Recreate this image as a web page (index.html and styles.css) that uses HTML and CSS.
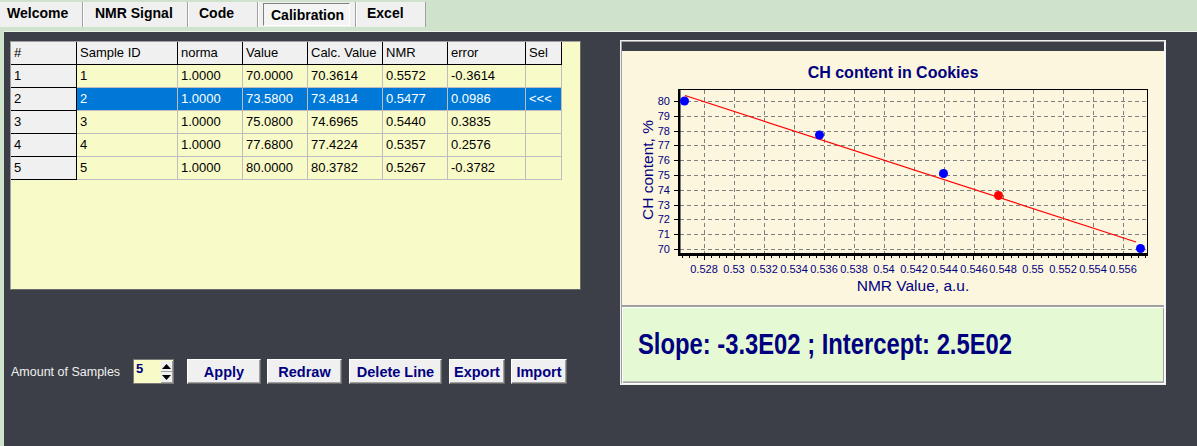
FILE: index.html
```html
<!DOCTYPE html>
<html>
<head>
<meta charset="utf-8">
<link rel="stylesheet" href="styles.css">
</head>
<body>
<div class="tabs">
  <div class="tab t1">Welcome</div>
  <div class="tab t2">NMR Signal</div>
  <div class="tab t3">Code</div>
  <div class="tab t4"><span class="pressed">Calibration</span></div>
  <div class="tab t5">Excel</div>
</div>
<div class="main">
  <div class="left">
    <div class="grid">
      <div class="cell fx">#</div><div class="cell h">Sample ID</div><div class="cell h">norma</div><div class="cell h">Value</div><div class="cell h">Calc. Value</div><div class="cell h">NMR</div><div class="cell h">error</div><div class="cell h">Sel</div>
      <div class="cell fx">1</div><div class="cell c">1</div><div class="cell c">1.0000</div><div class="cell c">70.0000</div><div class="cell c">70.3614</div><div class="cell c">0.5572</div><div class="cell c">-0.3614</div><div class="cell c"></div>
      <div class="cell fx">2</div><div class="cell c sel">2</div><div class="cell c sel">1.0000</div><div class="cell c sel">73.5800</div><div class="cell c sel">73.4814</div><div class="cell c sel">0.5477</div><div class="cell c sel">0.0986</div><div class="cell c sel">&lt;&lt;&lt;</div>
      <div class="cell fx">3</div><div class="cell c">3</div><div class="cell c">1.0000</div><div class="cell c">75.0800</div><div class="cell c">74.6965</div><div class="cell c">0.5440</div><div class="cell c">0.3835</div><div class="cell c"></div>
      <div class="cell fx">4</div><div class="cell c">4</div><div class="cell c">1.0000</div><div class="cell c">77.6800</div><div class="cell c">77.4224</div><div class="cell c">0.5357</div><div class="cell c">0.2576</div><div class="cell c"></div>
      <div class="cell fx">5</div><div class="cell c">5</div><div class="cell c">1.0000</div><div class="cell c">80.0000</div><div class="cell c">80.3782</div><div class="cell c">0.5267</div><div class="cell c">-0.3782</div><div class="cell c"></div>
    </div>
    <div class="controls">
      <span class="lbl">Amount of Samples</span>
      <div class="spin">
        <div class="spin-field">5</div>
        <div class="spin-btns">
          <div class="spin-btn"><svg width="9" height="5" viewBox="0 0 9 5"><path d="M4.5 0 L9 5 L0 5 Z" fill="#000"/></svg></div>
          <div class="spin-btn"><svg width="9" height="5" viewBox="0 0 9 5"><path d="M0 0 L9 0 L4.5 5 Z" fill="#000"/></svg></div>
        </div>
      </div>
      <button class="btn b-apply">Apply</button>
      <button class="btn b-redraw">Redraw</button>
      <button class="btn b-delete">Delete Line</button>
      <button class="btn b-export">Export</button>
      <button class="btn b-import">Import</button>
    </div>
  </div>
  <div class="chart-panel">
    <div class="chart-inner">
      <div class="chart-cap"></div>
      <svg class="plot" width="542" height="254" viewBox="622 51 542 254">
        <text x="893" y="78" class="title" text-anchor="middle">CH content in Cookies</text>
        <g class="grid-lines" stroke="#808080" stroke-width="1" stroke-dasharray="4 3">
          <line x1="680" y1="101.5" x2="1147" y2="101.5"/>
          <line x1="680" y1="116.5" x2="1147" y2="116.5"/>
          <line x1="680" y1="131.5" x2="1147" y2="131.5"/>
          <line x1="680" y1="145.5" x2="1147" y2="145.5"/>
          <line x1="680" y1="160.5" x2="1147" y2="160.5"/>
          <line x1="680" y1="175.5" x2="1147" y2="175.5"/>
          <line x1="680" y1="190.5" x2="1147" y2="190.5"/>
          <line x1="680" y1="205.5" x2="1147" y2="205.5"/>
          <line x1="680" y1="219.5" x2="1147" y2="219.5"/>
          <line x1="680" y1="234.5" x2="1147" y2="234.5"/>
          <line x1="680" y1="249.5" x2="1147" y2="249.5"/>
          <line x1="704.5" y1="90" x2="704.5" y2="253"/>
          <line x1="734.5" y1="90" x2="734.5" y2="253"/>
          <line x1="764.5" y1="90" x2="764.5" y2="253"/>
          <line x1="794.5" y1="90" x2="794.5" y2="253"/>
          <line x1="824.5" y1="90" x2="824.5" y2="253"/>
          <line x1="854.5" y1="90" x2="854.5" y2="253"/>
          <line x1="884.5" y1="90" x2="884.5" y2="253"/>
          <line x1="914.5" y1="90" x2="914.5" y2="253"/>
          <line x1="944.5" y1="90" x2="944.5" y2="253"/>
          <line x1="974.5" y1="90" x2="974.5" y2="253"/>
          <line x1="1003.5" y1="90" x2="1003.5" y2="253"/>
          <line x1="1033.5" y1="90" x2="1033.5" y2="253"/>
          <line x1="1063.5" y1="90" x2="1063.5" y2="253"/>
          <line x1="1093.5" y1="90" x2="1093.5" y2="253"/>
          <line x1="1123.5" y1="90" x2="1123.5" y2="253"/>
        </g>
        <g stroke="#000" stroke-width="1">
          <line x1="678" y1="89.5" x2="1148" y2="89.5"/>
          <line x1="1147.5" y1="89" x2="1147.5" y2="256"/>
          <line x1="674" y1="101.5" x2="678" y2="101.5"/>
          <line x1="674" y1="116.5" x2="678" y2="116.5"/>
          <line x1="674" y1="131.5" x2="678" y2="131.5"/>
          <line x1="674" y1="145.5" x2="678" y2="145.5"/>
          <line x1="674" y1="160.5" x2="678" y2="160.5"/>
          <line x1="674" y1="175.5" x2="678" y2="175.5"/>
          <line x1="674" y1="190.5" x2="678" y2="190.5"/>
          <line x1="674" y1="205.5" x2="678" y2="205.5"/>
          <line x1="674" y1="219.5" x2="678" y2="219.5"/>
          <line x1="674" y1="234.5" x2="678" y2="234.5"/>
          <line x1="674" y1="249.5" x2="678" y2="249.5"/>
        </g>
        <g stroke="#000" stroke-width="1" id="xticks"></g>
        <rect x="678" y="89" width="2.5" height="167" fill="#000"/>
        <rect x="678" y="253" width="470" height="3" fill="#000"/>
        <g class="ylab" text-anchor="end">
          <text x="670" y="105">80</text>
          <text x="670" y="120">79</text>
          <text x="670" y="135">78</text>
          <text x="670" y="149">77</text>
          <text x="670" y="164">76</text>
          <text x="670" y="179">75</text>
          <text x="670" y="194">74</text>
          <text x="670" y="209">73</text>
          <text x="670" y="223">72</text>
          <text x="670" y="238">71</text>
          <text x="670" y="253">70</text>
        </g>
        <g class="xlab" text-anchor="middle">
          <text x="704" y="273">0.528</text>
          <text x="734" y="273">0.53</text>
          <text x="764" y="273">0.532</text>
          <text x="794" y="273">0.534</text>
          <text x="824" y="273">0.536</text>
          <text x="854" y="273">0.538</text>
          <text x="884" y="273">0.54</text>
          <text x="914" y="273">0.542</text>
          <text x="944" y="273">0.544</text>
          <text x="974" y="273">0.546</text>
          <text x="1003" y="273">0.548</text>
          <text x="1033" y="273">0.55</text>
          <text x="1063" y="273">0.552</text>
          <text x="1093" y="273">0.554</text>
          <text x="1123" y="273">0.556</text>
        </g>
        <text class="axt" x="913" y="291" text-anchor="middle">NMR Value, a.u.</text>
        <text class="axt" x="0" y="0" text-anchor="middle" transform="translate(653 170) rotate(-90)">CH content, %</text>
        <line x1="685" y1="95.5" x2="1136" y2="242" stroke="#ff0000" stroke-width="1.2"/>
        <circle cx="684.5" cy="101" r="4.5" fill="#0000ff"/>
        <circle cx="819.5" cy="135" r="4.5" fill="#0000ff"/>
        <circle cx="943.5" cy="173.5" r="4.5" fill="#0000ff"/>
        <circle cx="998.5" cy="195.5" r="4.5" fill="#ff0000"/>
        <circle cx="1140.5" cy="248.5" r="4.5" fill="#0000ff"/>
      </svg>
      <div class="result"><span class="result-text">Slope: -3.3E02 ; Intercept: 2.5E02</span></div>
    </div>
  </div>
</div>
<script src="ticks.js"></script>
</body>
</html>
```

FILE: ticks.js
```js
(function () {
  var g = document.getElementById('xticks');
  var ns = 'http://www.w3.org/2000/svg';
  for (var i = -3; i <= 62; i++) {
    var x = 704 + i * 29.93 / 4;
    if (x < 679 || x > 1147) continue;
    var major = (i % 4 === 0);
    var l = document.createElementNS(ns, 'line');
    var xx = Math.round(x) + 0.5;
    l.setAttribute('x1', xx);
    l.setAttribute('x2', xx);
    l.setAttribute('y1', 256);
    l.setAttribute('y2', major ? 260 : 258);
    g.appendChild(l);
  }
})();
```

FILE: styles.css
```css
html, body {
  margin: 0;
  padding: 0;
}
body {
  width: 1197px;
  height: 446px;
  overflow: hidden;
  background: #cfe2cc;
  font-family: "Liberation Sans", Arial, sans-serif;
}
.tabs {
  display: flex;
  margin-top: 2px;
  height: 25px;
}
.tab {
  box-sizing: border-box;
  height: 25px;
  background: #f0f0f0;
  font-weight: bold;
  font-size: 14px;
  line-height: 23px;
  color: #000;
  border-right: 1px solid #a0a0a0;
  border-left: 1px solid #ffffff;
  white-space: nowrap;
}
.t1 { width: 83px; padding-left: 7px; border-left: 0; }
.t2 { width: 105px; padding-left: 11px; }
.t3 { width: 70px; padding-left: 10px; }
.t4 { width: 98px; padding-left: 4px; }
.t5 { width: 70px; padding-left: 10px; }
.pressed {
  display: inline-block;
  box-sizing: border-box;
  width: 87px;
  height: 23px;
  margin-top: 1px;
  padding-left: 7px;
  line-height: 22px;
  border: 1px solid;
  border-color: #808080 #ffffff #ffffff #808080;
  background: #f4f4f4;
  vertical-align: top;
}
.main {
  display: flex;
  margin-top: 4px;
  margin-left: 4px;
  height: 414px;
  border-top: 1px solid #eef4ec;
  background: #3c3f47;
}
.left {
  box-sizing: border-box;
  width: 616px;
  padding: 9px 0 0 6px;
}
.grid {
  box-sizing: border-box;
  width: 571px;
  height: 249px;
  border: 1px solid;
  border-color: #a0a0a0 #696969 #696969 #a0a0a0;
  background: #f8fac8;
  display: grid;
  grid-template-columns: 66px 101px 65px 65px 75px 65px 78px 36px;
  grid-auto-rows: 23px;
  align-content: start;
}
.cell {
  box-sizing: border-box;
  font-size: 13px;
  line-height: 22px;
  padding-left: 3px;
  color: #000;
  border-right: 1px solid #bdbdbd;
  border-bottom: 1px solid #bdbdbd;
  white-space: nowrap;
  overflow: hidden;
}
.fx {
  background: #f0f0f0;
  border-right-color: #000;
  border-bottom-color: #000;
}
.h {
  background: #f0f0f0;
  border-right-color: #000;
  border-bottom-color: #000;
}
.c { background: #f8fac8; }
.sel {
  background: #0078d7;
  color: #fff;
}
.controls {
  display: flex;
  align-items: center;
  margin-top: 69px;
  height: 25px;
}
.lbl {
  margin-left: 1px;
  width: 122px;
  color: #f0f0f0;
  font-size: 12.5px;
  white-space: nowrap;
}
.spin {
  box-sizing: border-box;
  display: flex;
  width: 41px;
  height: 25px;
  border: 1px solid #7a7a7a;
  background: #f8fac8;
}
.spin-field {
  width: 26px;
  padding-left: 2px;
  font-size: 13px;
  font-weight: bold;
  color: #000080;
  line-height: 17px;
}
.spin-btns {
  display: flex;
  flex-direction: column;
  width: 13px;
  padding-top: 1px;
}
.spin-btn {
  box-sizing: border-box;
  height: 11px;
  background: #f0f0f0;
  border-right: 1px solid #a0a0a0;
  border-bottom: 1px solid #a0a0a0;
  display: flex;
  align-items: center;
  justify-content: center;
}
.btn {
  box-sizing: border-box;
  height: 25px;
  padding: 0;
  background: #f0f0f0;
  border: 1px solid;
  border-color: #ffffff #696969 #696969 #ffffff;
  box-shadow: inset -1px -1px 0 #a0a0a0;
  font-family: "Liberation Sans", Arial, sans-serif;
  font-weight: bold;
  font-size: 14.5px;
  color: #000080;
  line-height: 22px;
  text-align: center;
}
.b-apply { margin-left: 13px; width: 74px; }
.b-redraw { margin-left: 6px; width: 75px; }
.b-delete { margin-left: 7px; width: 93px; }
.b-export { margin-left: 7px; width: 56px; }
.b-import { margin-left: 6px; width: 56px; }
.chart-panel {
  box-sizing: border-box;
  margin-top: 8px;
  width: 546px;
  height: 345px;
  border: 1px solid #f0f0f0;
}
.chart-inner {
  box-sizing: border-box;
  height: 343px;
  border: 1px solid;
  border-color: #a0a0a0 #ffffff #ffffff #a0a0a0;
  display: flex;
  flex-direction: column;
}
.chart-cap {
  height: 9px;
  background: #3c3f47;
}
.plot {
  display: block;
  background: #fdf6de;
  flex: none;
}
.title {
  font-size: 16px;
  font-weight: bold;
  fill: #000080;
}
.ylab text, .xlab text {
  font-size: 11px;
  fill: #000080;
}
.axt {
  font-size: 15.5px;
  fill: #000080;
}
.result {
  box-sizing: border-box;
  flex: 1;
  border-top: 2px solid #a0a0a0;
  background: #e4f9d4;
  box-shadow: inset 1px 1px 0 #ffffff, inset -1px -1px 0 #a0a0a0, inset 0 -2px 0 #c0c0c0;
  display: flex;
  align-items: center;
  padding-left: 16px;
  padding-bottom: 2px;
}
.result-text {
  display: inline-block;
  font-size: 29px;
  font-weight: bold;
  color: #000080;
  white-space: nowrap;
  transform: scaleX(0.82);
  transform-origin: left center;
}
```
